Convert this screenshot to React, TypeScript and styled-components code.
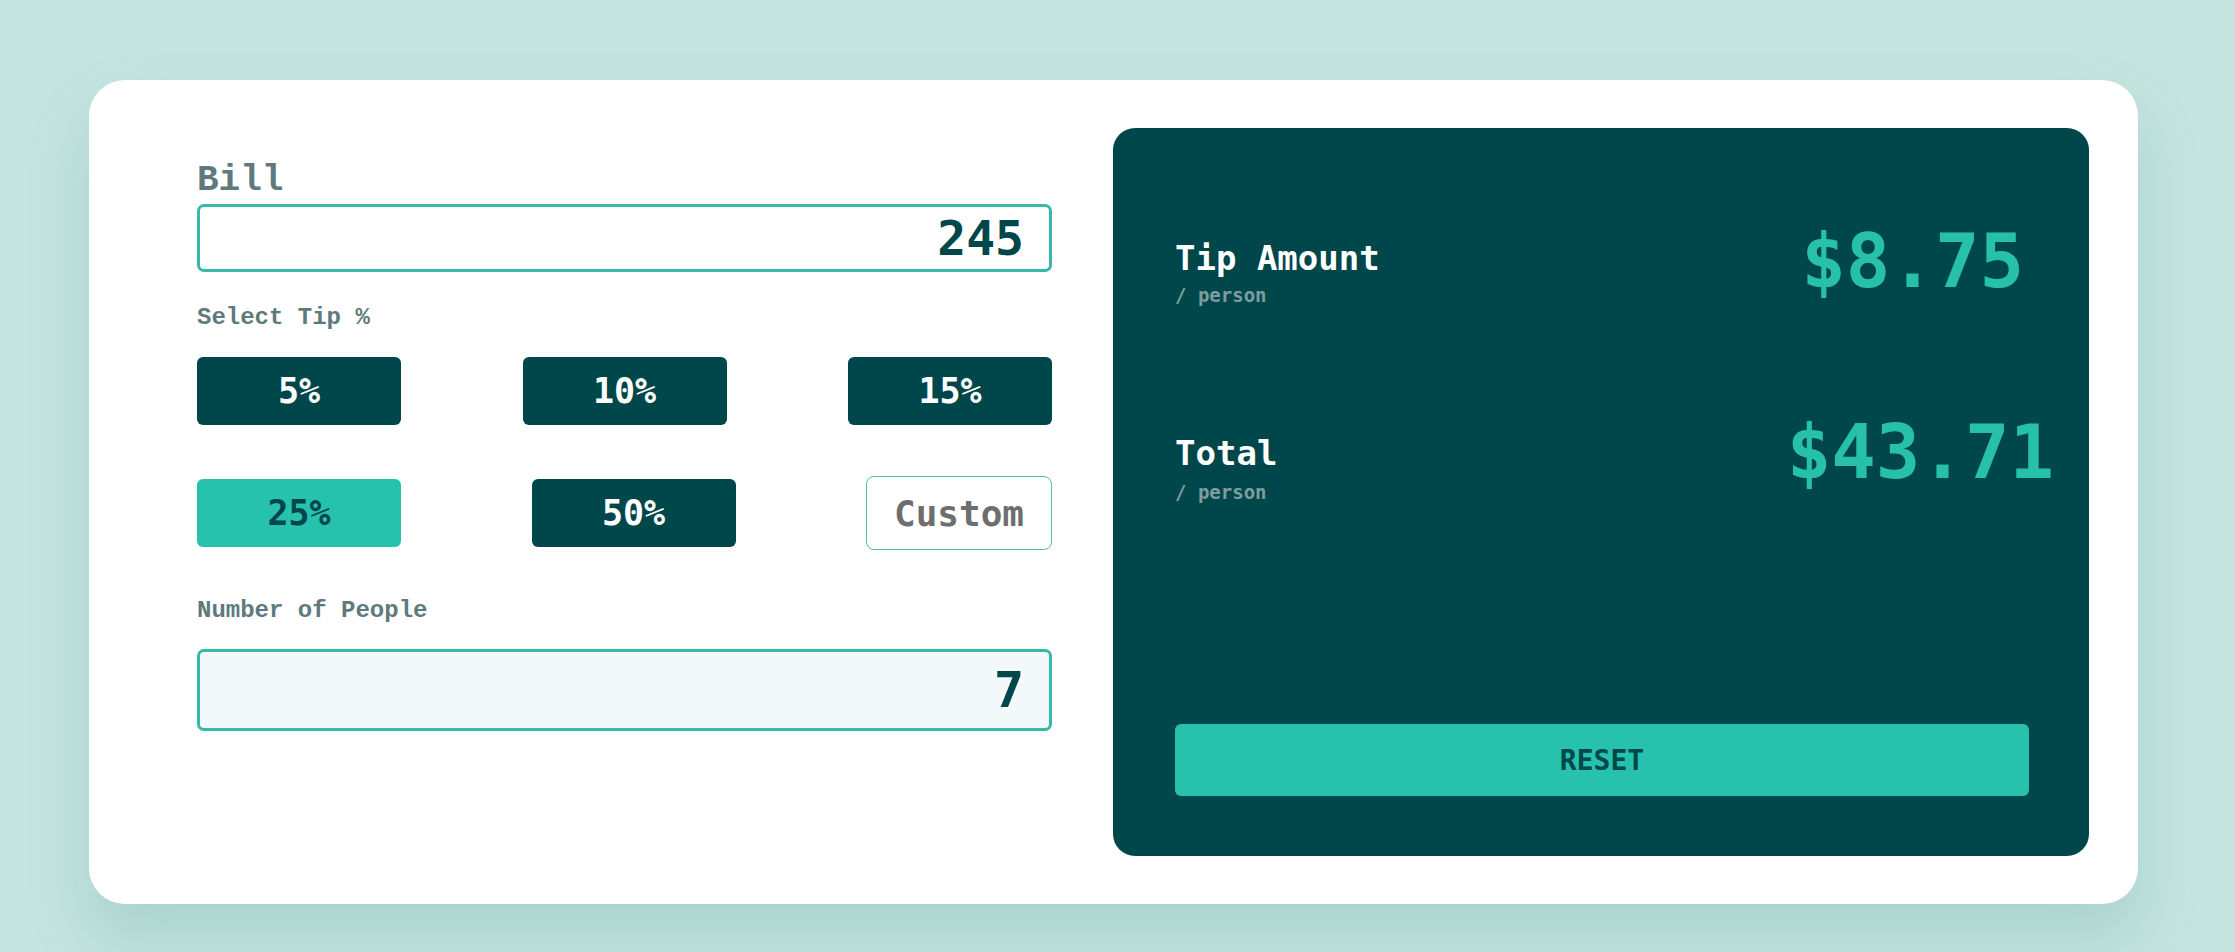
import styled, { createGlobalStyle } from "styled-components";

const GlobalStyle = createGlobalStyle`
  body {
    margin: 0;
    background: #c5e4df;
    font-family: "DejaVu Sans Mono", monospace;
  }
`;

const tips = [
  ["5%", "10%", "15%"],
  ["25%", "50%"],
];

const App: React.FC = () => {
  return (
    <>
      <GlobalStyle />
      <Page>
        <Card>
          <Form>
            <Label $size={36} $top={35}>
              Bill
            </Label>
            <AmountInput defaultValue="245" $top={5} />
            <Label $size={24} $top={34}>
              Select Tip %
            </Label>
            <TipRow $top={27}>
              {tips[0].map((t) => (
                <TipButton key={t}>{t}</TipButton>
              ))}
            </TipRow>
            <TipRow $top={51}>
              <TipButton $active>{tips[1][0]}</TipButton>
              <TipButton>{tips[1][1]}</TipButton>
              <CustomInput placeholder="Custom" />
            </TipRow>
            <Label $size={24} $top={49}>
              Number of People
            </Label>
            <PeopleInput defaultValue="7" />
          </Form>

          <Results>
            <ResultRow>
              <ResultText $top={17} $gap={11}>
                <ResultTitle>Tip Amount</ResultTitle>
                <PerPerson>/ person</PerPerson>
              </ResultText>
              <ResultValue $shift={5}>$8.75</ResultValue>
            </ResultRow>
            <ResultRow $top={110}>
              <ResultText $top={21} $gap={13}>
                <ResultTitle>Total</ResultTitle>
                <PerPerson>/ person</PerPerson>
              </ResultText>
              <ResultValue $shift={-25}>$43.71</ResultValue>
            </ResultRow>
            <ResetButton>RESET</ResetButton>
          </Results>
        </Card>
      </Page>
    </>
  );
};

const Page = styled.main`
  min-height: 952px;
  box-sizing: border-box;
  padding: 80px 0 0 89px;
`;

const Card = styled.section`
  width: 2049px;
  box-sizing: border-box;
  display: flex;
  gap: 61px;
  padding: 48px 49px 48px 108px;
  background: #ffffff;
  border-radius: 36px;
  box-shadow: 0 34px 60px rgba(70, 150, 150, 0.22);
`;

const Form = styled.div`
  width: 855px;
  display: flex;
  flex-direction: column;
`;

const Label = styled.label<{ $size: number; $top: number }>`
  display: block;
  margin-top: ${(p) => p.$top}px;
  font-family: "Liberation Mono", monospace;
  font-weight: 700;
  font-size: ${(p) => p.$size}px;
  line-height: 1;
  color: #5e7a7d;
`;

const AmountInput = styled.input<{ $top?: number }>`
  margin-top: ${(p) => p.$top ?? 0}px;
  width: 100%;
  height: 68px;
  box-sizing: border-box;
  padding: 0 25px;
  border: 3px solid #36b9a7;
  border-radius: 7px;
  background: #ffffff;
  font-family: "DejaVu Sans Mono", monospace;
  font-weight: 700;
  font-size: 48px;
  color: #00474b;
  text-align: right;
  outline: none;
`;

const PeopleInput = styled(AmountInput)`
  margin-top: 26px;
  height: 82px;
  font-size: 50px;
  background: #f3f8fb;
`;

const TipRow = styled.div<{ $top: number }>`
  margin-top: ${(p) => p.$top}px;
  display: flex;
  justify-content: space-between;
  align-items: center;
`;

const TipButton = styled.button<{ $active?: boolean }>`
  width: 204px;
  height: 68px;
  border: none;
  border-radius: 6px;
  background: ${(p) => (p.$active ? "#26c2ae" : "#00474b")};
  color: ${(p) => (p.$active ? "#00474b" : "#ffffff")};
  font-family: "DejaVu Sans Mono", monospace;
  font-weight: 700;
  font-size: 35px;
  cursor: pointer;
`;

const CustomInput = styled.input`
  width: 186px;
  height: 74px;
  box-sizing: border-box;
  border: 1px solid #4fbfb0;
  border-radius: 8px;
  background: #ffffff;
  font-family: "DejaVu Sans Mono", monospace;
  font-weight: 700;
  font-size: 36px;
  text-align: center;
  color: #6e6e6e;
  outline: none;

  &::placeholder {
    color: #6e6e6e;
  }
`;

const Results = styled.div`
  width: 976px;
  min-height: 728px;
  box-sizing: border-box;
  display: flex;
  flex-direction: column;
  padding: 96px 60px 60px 62px;
  background: #00474b;
  border-radius: 22px;
`;

const ResultRow = styled.div<{ $top?: number }>`
  margin-top: ${(p) => p.$top ?? 0}px;
  display: flex;
  justify-content: space-between;
  align-items: flex-start;
`;

const ResultText = styled.div<{ $top: number; $gap: number }>`
  margin-top: ${(p) => p.$top}px;
  display: flex;
  flex-direction: column;
  gap: ${(p) => p.$gap}px;
`;

const ResultTitle = styled.div`
  font-weight: 700;
  font-size: 34px;
  line-height: 1;
  color: #ffffff;
`;

const PerPerson = styled.div`
  font-weight: 700;
  font-size: 19px;
  line-height: 1;
  color: #7f9d9f;
`;

const ResultValue = styled.div<{ $shift: number }>`
  margin-right: ${(p) => p.$shift}px;
  font-weight: 700;
  font-size: 74px;
  line-height: 1;
  color: #26c0ab;
`;

const ResetButton = styled.button`
  margin-top: auto;
  width: 100%;
  height: 72px;
  border: none;
  border-radius: 6px;
  background: #26c2ae;
  color: #00474b;
  font-family: "DejaVu Sans Mono", monospace;
  font-weight: 700;
  font-size: 28px;
  cursor: pointer;
`;

export default App;
